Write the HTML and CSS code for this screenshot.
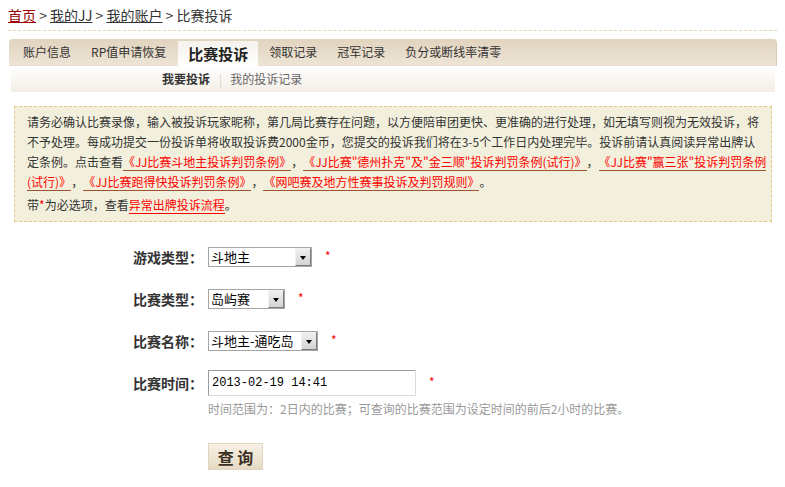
FILE: index.html
```html
<!DOCTYPE html>
<html lang="zh-CN">
<head>
  <meta charset="UTF-8">
  <title>比赛投诉</title>
  <link rel="stylesheet" href="styles.css">
</head>
<body>
  <div class="page">
    <div class="crumb">
      <a href="#" class="home">首页</a> &gt; <a href="#">我的JJ</a> &gt; <a href="#">我的账户</a> &gt; 比赛投诉
    </div>

    <div class="tabs">
      <a href="#">账户信息</a>
      <a href="#">RP值申请恢复</a>
      <a href="#" class="active">比赛投诉</a>
      <a href="#">领取记录</a>
      <a href="#">冠军记录</a>
      <a href="#">负分或断线率清零</a>
    </div>
    <div class="subnav">
      <b>我要投诉</b><span class="sep">|</span><a href="#">我的投诉记录</a>
    </div>

    <div class="notice">
      <p>请务必确认比赛录像，输入被投诉玩家昵称，第几局比赛存在问题，以方便陪审团更快、更准确的进行处理，如无填写则视为无效投诉，将不予处理。每成功提交一份投诉单将收取投诉费2000金币，您提交的投诉我们将在3-5个工作日内处理完毕。投诉前请认真阅读异常出牌认定条例。点击查看<a href="#">《JJ比赛斗地主投诉判罚条例》</a>，<a href="#">《JJ比赛"德州扑克"及"金三顺"投诉判罚条例(试行)》</a>，<a href="#">《JJ比赛"赢三张"投诉判罚条例(试行)》</a>，<a href="#">《JJ比赛跑得快投诉判罚条例》</a>，<a href="#">《网吧赛及地方性赛事投诉及判罚规则》</a>。</p>
      <p class="tip">带<em>*</em>为必选项，查看<a href="#" class="flow">异常出牌投诉流程</a>。</p>
    </div>

    <form class="complaint">
      <div class="row">
        <label>游戏类型：</label>
        <span class="select w104"><select><option>斗地主</option></select><i class="arrow"></i></span>
        <em class="star">*</em>
      </div>
      <div class="row">
        <label>比赛类型：</label>
        <span class="select w77"><select><option>岛屿赛</option></select><i class="arrow"></i></span>
        <em class="star">*</em>
      </div>
      <div class="row">
        <label>比赛名称：</label>
        <span class="select w110"><select><option>斗地主-通吃岛</option></select><i class="arrow"></i></span>
        <em class="star">*</em>
      </div>
      <div class="row row-time">
        <label>比赛时间：</label>
        <input type="text" class="time" value="2013-02-19 14:41">
        <em class="star">*</em>
      </div>
      <p class="hint">时间范围为：2日内的比赛；可查询的比赛范围为设定时间的前后2小时的比赛。</p>
      <button type="button" class="query">查 询</button>
    </form>
  </div>
</body>
</html>
```

FILE: styles.css
```css
body {
  margin: 0;
  font-family: "Noto Sans CJK SC", "Noto Sans", sans-serif;
  font-size: 12px;
  color: #333;
  background: #fff;
  text-spacing-trim: space-all;
}
.page {
  padding: 4px 8px 0 8px;
}
a {
  color: #333;
}

/* breadcrumb */
.crumb {
  font-size: 14px;
  line-height: 22px;
  padding-bottom: 4px;
  border-bottom: 1px dashed #e3d3bb;
  color: #333;
}
.crumb a {
  text-decoration: underline;
}
.crumb .home {
  color: #990000;
}

/* tabs */
.tabs {
  display: flex;
  align-items: flex-end;
  height: 27px;
  margin: 8px 0 0 1px;
  padding-left: 4px;
  background: linear-gradient(#e1d4bf, #ede4d5);
  border-radius: 4px 4px 0 0;
  border-right: 1px solid #d9ccb8;
  border-bottom: 1px solid #e9dfcf;
  box-sizing: border-box;
}
.tabs a {
  text-decoration: none;
  color: #333;
  font-size: 12px;
  line-height: 26px;
  padding: 0 10px;
}
.tabs a.active {
  font-size: 15px;
  font-weight: bold;
  color: #222;
  line-height: 25px;
  margin: 0 1px -1px 2px;
  background: linear-gradient(#f6f2ec, #fff);
}

.subnav {
  height: 26px;
  line-height: 26px;
  margin: 0 2px 0 3px;
  padding-left: 151px;
  background: linear-gradient(#fff, #f3eee6);
  color: #666;
}
.subnav b {
  color: #333;
}
.subnav .sep {
  color: #e0cccc;
  margin: 0 8px 0 9px;
}
.subnav a {
  color: #666;
  text-decoration: none;
}

/* notice */
.notice {
  margin: 14px 5px 0 6px;
  padding: 5px 4px 6px 12px;
  border: 1px dashed #e8c98c;
  background: #f2f0dc;
  line-height: 20px;
  color: #333;
}
.notice p {
  margin: 0;
}
.notice .tip {
  margin-top: 3px;
}
.notice a {
  color: #f00;
  text-decoration: none;
  border-bottom: 1px solid #a0522d;
}
.notice a.flow {
  border-bottom-color: #f00;
}
.notice em {
  font-style: normal;
  color: #f00;
}

/* form */
.complaint {
  margin: 25px 0 0 125px;
}
.row {
  display: flex;
  align-items: center;
  height: 20px;
  margin-bottom: 22px;
}
.row label {
  width: 75px;
  font-size: 14px;
  font-weight: bold;
  color: #333;
}
.row-time {
  height: 26px;
  margin-top: -3px;
  margin-bottom: 0;
}
.star {
  font-style: normal;
  color: #f00;
  font-size: 12px;
  margin: -4px 0 0 13px;
}

.select {
  position: relative;
  display: inline-block;
  height: 20px;
  border: 1px solid #a5a5a5;
  box-sizing: border-box;
  background: #fff;
}
.w104 { width: 104px; }
.w77 { width: 77px; }
.w110 { width: 110px; }
.select select {
  appearance: none;
  -webkit-appearance: none;
  border: 0;
  outline: none;
  width: 100%;
  height: 18px;
  padding: 0 0 0 2px;
  font-family: "Noto Sans CJK SC", sans-serif;
  font-size: 13px;
  line-height: 18px;
  color: #000;
  background: #fff;
}
.select .arrow {
  position: absolute;
  top: 0;
  right: 0;
  width: 16px;
  height: 18px;
  box-sizing: border-box;
  border: 1px solid;
  border-color: #f2f2f2 #7c7c7c #7c7c7c #f2f2f2;
  background: linear-gradient(#f0f0f0, #d3d3d3);
}
.select .arrow::after {
  content: "";
  position: absolute;
  left: 4px;
  top: 7px;
  border-left: 3px solid transparent;
  border-right: 3px solid transparent;
  border-top: 4px solid #000;
}

.time {
  width: 208px;
  height: 26px;
  box-sizing: border-box;
  border: 1px solid;
  border-color: #9c9c9c #dcdcdc #dcdcdc #9c9c9c;
  padding: 0 3px;
  font-family: "Liberation Mono", monospace;
  font-size: 12px;
  color: #000;
}

.hint {
  margin: 5px 0 0 75px;
  line-height: 16px;
  color: #999;
}
.query {
  margin: 26px 0 0 75px;
  width: 55px;
  height: 27px;
  border: 1px solid #e2d5bf;
  background: linear-gradient(#f6f0e5, #e6dac4);
  font-family: "Noto Sans CJK SC", sans-serif;
  font-size: 16px;
  font-weight: bold;
  color: #3c3024;
  padding: 0;
  cursor: pointer;
}
```
